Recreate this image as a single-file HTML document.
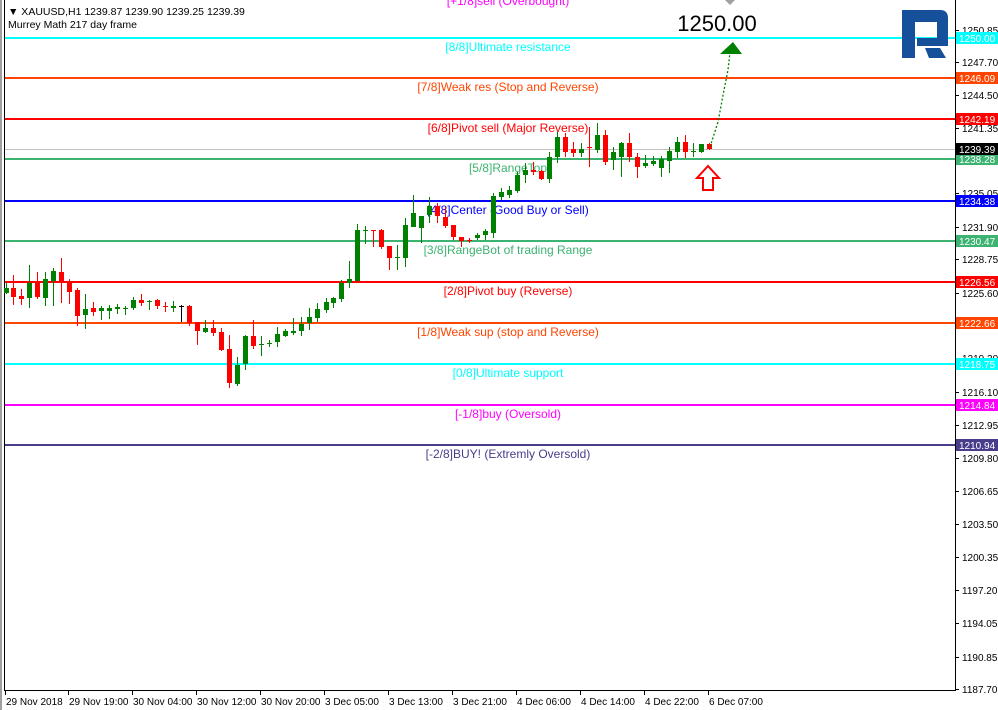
<!DOCTYPE html>
<html><head><meta charset="utf-8"><style>
html,body{margin:0;padding:0;background:#fff;}
body{width:998px;height:710px;overflow:hidden;position:relative;font-family:"Liberation Sans",sans-serif;}
svg{position:absolute;left:0;top:0;}
</style></head><body>
<svg id="s" width="998" height="710" xmlns="http://www.w3.org/2000/svg" font-family="Liberation Sans, sans-serif">
<rect x="0" y="0" width="998" height="710" fill="#fff"/>
<line x1="1" y1="0" x2="1" y2="710" stroke="#a0a0a0" stroke-width="2"/>
<line x1="4.5" y1="0" x2="4.5" y2="691" stroke="#000" stroke-width="1"/>
<line x1="955.5" y1="0" x2="955.5" y2="691" stroke="#000" stroke-width="1"/>
<line x1="4" y1="690.5" x2="956" y2="690.5" stroke="#000" stroke-width="1"/>
<g id="lines"></g>
<g id="candles"></g>
<g id="axis" font-size="10" fill="#000"></g>
<!-- logo -->
<g fill="#17509a">
<rect x="902" y="10" width="13" height="48"/>
<path d="M902 10 H940 Q948 10 948 18 V46 H917 V38 H937 V22 H902 Z"/>
<path d="M925 48 H940 L946 58 H929 Z"/>
</g>
<text x="717" y="31" font-size="22" text-anchor="middle" fill="#000">1250.00</text>
<path d="M194 0" />
<polygon points="197,0 207,0 202,5" fill="#a0a0a0" transform="translate(528,0)"/>
<path d="M710 147 L718 122 L724 90 L728 70 L730 52" fill="none" stroke="#008000" stroke-width="1.3" stroke-dasharray="2,2"/>
<polygon points="720,54 742,54 733,42" fill="#008000"/>
<path d="M703 190 V178 H697 L708 166 L719 178 H713 V190 Z" fill="#fff" stroke="#ff0000" stroke-width="2"/>
<text x="8" y="15" font-size="10.5" fill="#000">▼ XAUUSD,H1  1239.87 1239.90 1239.25 1239.39</text>
<text x="8" y="28" font-size="10.5" fill="#000">Murrey Math 217 day frame</text>
</svg>
<script>
var NS="http://www.w3.org/2000/svg";
function el(p,t,a,txt){var e=document.createElementNS(NS,t);for(var k in a)e.setAttribute(k,a[k]);if(txt!=null)e.textContent=txt;document.getElementById(p).appendChild(e);return e;}
var L=[
[-3,"#ff00ff","[+1/8]sell (Overbought)",null,5],
[38,"#00ffff","[8/8]Ultimate resistance","1250.00"],
[78,"#ff4500","[7/8]Weak res (Stop and Reverse)","1246.09"],
[119,"#ff0000","[6/8]Pivot sell (Major Reverse)","1242.19"],
[159,"#3cb371","[5/8]RangeTop","1238.28"],
[201,"#0000ff","[4/8]Center (Good Buy or Sell)","1234.38"],
[241,"#3cb371","[3/8]RangeBot of trading Range","1230.47"],
[282,"#ff0000","[2/8]Pivot buy (Reverse)","1226.56"],
[323,"#ff4500","[1/8]Weak sup (stop and Reverse)","1222.66"],
[364,"#00ffff","[0/8]Ultimate support","1218.75"],
[405,"#ff00ff","[-1/8]buy (Oversold)","1214.84"],
[445,"#483d8b","[-2/8]BUY! (Extremly Oversold)","1210.94"]];
// axis ticks
var T=[[30,"1250.85"],[62,"1247.70"],[95,"1244.50"],[128,"1241.35"],[193,"1235.05"],[227,"1231.90"],[259,"1228.75"],[293,"1225.60"],[358,"1219.30"],[392,"1216.10"],[425,"1212.95"],[458,"1209.80"],[491,"1206.65"],[524,"1203.50"],[557,"1200.35"],[590,"1197.20"],[623,"1194.05"],[657,"1190.85"],[689,"1187.70"]];
T.forEach(function(t){el("axis","line",{x1:955,y1:t[0]+.5,x2:959,y2:t[0]+.5,stroke:"#000"});el("axis","text",{x:962,y:t[0]+4},t[1]);});
el("lines","line",{x1:5,y1:149.5,x2:955,y2:149.5,stroke:"#c0c0c0","stroke-width":1});
L.forEach(function(l){
 el("lines","line",{x1:5,y1:l[0],x2:955,y2:l[0],stroke:l[1],"stroke-width":2});
 el("lines","text",{x:508,y:(l[4]||l[0]+13),"font-size":"12","text-anchor":"middle",fill:l[1]},l[2]);
 if(l[3]){el("axis","rect",{x:956,y:l[0]-6,width:42,height:12,fill:l[1]});
 el("axis","text",{x:959,y:l[0]+4,fill:"#fff"},l[3]);}
});
el("axis","rect",{x:956,y:143,width:42,height:12,fill:"#000"});
el("axis","text",{x:959,y:153,fill:"#fff"},"1239.39");
// time axis
var X=[[5,"29 Nov 2018"],[68,"29 Nov 19:00"],[132,"30 Nov 04:00"],[196,"30 Nov 12:00"],[260,"30 Nov 20:00"],[324,"3 Dec 05:00"],[388,"3 Dec 13:00"],[452,"3 Dec 21:00"],[516,"4 Dec 06:00"],[580,"4 Dec 14:00"],[644,"4 Dec 22:00"],[708,"6 Dec 07:00"]];
X.forEach(function(t){el("axis","line",{x1:t[0]+.5,y1:690,x2:t[0]+.5,y2:695,stroke:"#000"});el("axis","text",{x:t[0]+1,y:705},t[1]);});
// candles: x, bodyTop, bodyBot, wickTop, wickBot, color(g/r/k)
var C=[
[6,288,293,283,294,"g"],[13,288,297,275,305,"r"],[21,296,299,289,305,"r"],[29,283,298,265,308,"g"],[37,283,297,272,299,"r"],[45,279,298,272,306,"g"],[53,271,281,268,306,"g"],[61,272,281,258,303,"r"],[69,282,292,279,304,"r"],[77,290,316,288,326,"r"],[85,309,315,294,329,"g"],[93,308,312,302,316,"r"],[101,308,311,306,320,"g"],[109,308,311,305,319,"g"],[117,307,309,304,314,"g"],[125,308,309,306,315,"g"],[133,300,308,297,310,"g"],[141,300,303,294,306,"r"],[149,301,302,300,310,"g"],[157,300,306,299,309,"r"],[165,306,307,302,312,"r"],[173,306,308,301,312,"g"],[181,306,306,305,322,"k"],[189,306,323,305,326,"r"],[197,322,331,322,345,"r"],[205,328,332,320,333,"g"],[213,328,333,320,336,"r"],[221,332,350,328,351,"r"],[229,349,383,335,388,"r"],[237,365,384,357,386,"g"],[245,336,364,335,370,"g"],[253,336,346,320,349,"r"],[261,344,345,336,356,"g"],[269,343,344,340,347,"g"],[277,334,342,327,347,"g"],[285,331,336,329,337,"g"],[293,331,333,318,335,"g"],[301,324,331,317,336,"g"],[309,317,323,308,330,"g"],[317,309,318,303,322,"g"],[326,302,310,298,313,"g"],[333,298,303,297,308,"g"],[341,283,299,280,302,"g"],[349,279,283,261,288,"g"],[357,230,281,224,281,"g"],[365,230,231,226,244,"g"],[373,230,231,230,247,"r"],[381,230,247,229,249,"r"],[389,246,258,246,270,"r"],[397,257,258,245,270,"g"],[405,225,258,218,267,"g"],[413,213,227,195,227,"g"],[421,216,228,216,243,"g"],[429,206,215,197,223,"g"],[437,206,216,203,223,"r"],[445,217,226,207,228,"r"],[453,225,237,225,240,"r"],[461,237,241,237,247,"r"],[469,240,241,238,243,"r"],[477,235,238,233,240,"g"],[485,231,235,229,240,"g"],[493,196,233,193,238,"g"],[501,192,197,188,200,"g"],[509,190,195,186,198,"g"],[517,175,191,172,193,"g"],[525,170,175,163,183,"g"],[533,170,172,162,175,"r"],[541,171,179,170,180,"r"],[549,157,179,152,183,"g"],[557,137,157,132,163,"g"],[565,137,152,133,157,"r"],[573,149,153,142,157,"r"],[581,149,153,143,157,"g"],[589,147,148,127,167,"r"],[597,135,150,123,153,"g"],[605,135,162,130,165,"r"],[613,152,160,147,170,"g"],[621,143,157,142,177,"g"],[629,143,157,133,162,"r"],[637,157,167,153,178,"r"],[645,163,166,155,168,"g"],[653,161,164,156,166,"g"],[661,159,168,156,177,"g"],[669,151,161,147,173,"g"],[677,142,152,137,158,"g"],[685,142,152,135,158,"r"],[693,151,152,143,157,"g"],[701,144,152,144,153,"g"],[709,144,149,143,150,"r"]];
var col={g:"#008000",r:"#ff0000",k:"#000000"};
C.forEach(function(c){var k=col[c[5]];
 el("candles","line",{x1:c[0]+.5,y1:c[3],x2:c[0]+.5,y2:c[4],stroke:k,"stroke-width":1});
 el("candles","rect",{x:c[0]-2,y:c[1],width:5,height:Math.max(1,c[2]-c[1]),fill:k});});
</script>
</body></html>
